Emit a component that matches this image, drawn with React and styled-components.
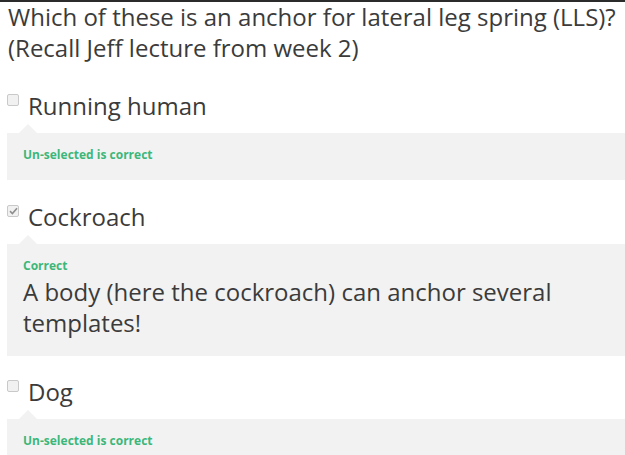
import React from "react";
import styled, { createGlobalStyle } from "styled-components";

const Global = createGlobalStyle`
  html, body { margin: 0; padding: 0; background: #fff; }
  body { font-family: "Open Sans", "Liberation Sans", sans-serif; color: #3b3b3b; overflow: hidden; }
`;

const TopBar = styled.div`
  height: 2px;
  background: #2b2b2b;
`;

const Page = styled.div`
  padding: 0 0 0 7px;
`;

const Question = styled.div`
  font-size: 24px;
  line-height: 31px;
  padding-left: 1px;
  margin-top: -1px;
  margin-bottom: 27px;
`;

const Option = styled.div`
  margin-bottom: ${(p) => p.$after}px;
`;

const Row = styled.div`
  display: flex;
  align-items: flex-start;
  gap: 9px;
  font-size: 24px;
  line-height: 31px;
`;

const Box = styled.span`
  flex: none;
  width: 10px;
  height: 10px;
  margin-top: 4px;
  border: 1px solid #c9c9c9;
  border-radius: 2px;
  background: #f1f1f1;
  display: flex;
  align-items: center;
  justify-content: center;
`;

const Feedback = styled.div`
  position: relative;
  margin-top: 12px;
  background: #f2f2f2;
  padding: 14px 16px 18px;
  &::before {
    content: "";
    position: absolute;
    left: 12px;
    top: -9px;
    border-left: 9px solid transparent;
    border-right: 9px solid transparent;
    border-bottom: 9px solid #f2f2f2;
  }
`;

const Verdict = styled.div`
  font-size: 12px;
  line-height: 15px;
  font-weight: 700;
  color: #3cb77a;
`;

const Explanation = styled.div`
  margin-top: 3px;
  font-size: 24px;
  line-height: 31px;
  color: #3b3b3b;
`;

const Check = () => (
  <svg width="9" height="8" viewBox="0 0 9 8">
    <path d="M1 4.2 L3.4 6.5 L8 1.2" fill="none" stroke="#8e8e8e" strokeWidth="1.6" />
  </svg>
);

const items = [
  { label: "Running human", checked: false, verdict: "Un-selected is correct", after: 21 },
  {
    label: "Cockroach",
    checked: true,
    verdict: "Correct",
    text: "A body (here the cockroach) can anchor several templates!",
    after: 20,
  },
  { label: "Dog", checked: false, verdict: "Un-selected is correct", after: 0 },
];

export default function App() {
  return (
    <>
      <Global />
      <TopBar />
      <Page>
        <Question>
          Which of these is an anchor for lateral leg spring (LLS)?
          <br />
          (Recall Jeff lecture from week 2)
        </Question>
        {items.map((it) => (
          <Option key={it.label} $after={it.after}>
            <Row>
              <Box>{it.checked && <Check />}</Box>
              <span>{it.label}</span>
            </Row>
            <Feedback>
              <Verdict>{it.verdict}</Verdict>
              {it.text && <Explanation>{it.text}</Explanation>}
            </Feedback>
          </Option>
        ))}
      </Page>
    </>
  );
}
